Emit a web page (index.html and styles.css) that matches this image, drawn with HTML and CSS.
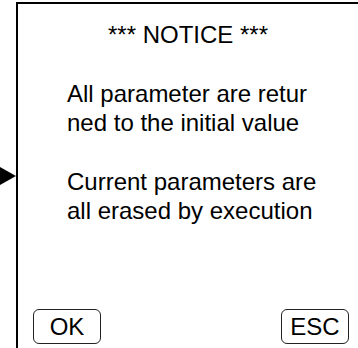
FILE: index.html
```html
<!DOCTYPE html>
<html lang="en">

<head>
    <meta charset="UTF-8">
    <title>Notice</title>
    <link rel="stylesheet" href="styles.css">
</head>

<body>

    <div class="screen">
        <!-- Cursor marker on the left edge -->
        <div class="marker">
            <svg width="16" height="18" viewBox="0 0 16 18">
                <polygon points="0,0 16,9 0,18" fill="#000" />
            </svg>
        </div>

        <div class="panel">
            <div class="title">*** NOTICE ***</div>
            <p class="message">All parameter are retur<br>ned to the initial value</p>
            <p class="message">Current parameters are<br>all erased by execution</p>

            <div class="actions">
                <button class="key">OK</button>
                <button class="key">ESC</button>
            </div>
        </div>
    </div>

</body>

</html>
```

FILE: styles.css
```css
body {
    margin: 0;
    padding: 0;
    background-color: #fff;
    font-family: 'Liberation Sans', Arial, sans-serif;
    color: #000;
}

.screen {
    display: flex;
    width: 358px;
    height: 348px;
    overflow: hidden;
}

.marker {
    width: 16px;
    flex-shrink: 0;
    margin-top: 167px;
}

.marker svg {
    display: block;
}

.panel {
    flex: 1;
    display: flex;
    flex-direction: column;
    margin-top: 2px;
    border-left: 2px solid #000;
    border-top: 2px solid #000;
    padding-top: 16px;
}

.title {
    font-size: 24px;
    line-height: 29px;
    text-align: center;
}

.message {
    margin: 30px 0 0 0;
    padding-left: 49px;
    font-size: 24px;
    line-height: 29px;
}

.actions {
    margin-top: auto;
    display: flex;
    justify-content: space-between;
    padding: 0 9px 4px 15px;
}

.key {
    width: 68px;
    height: 35px;
    padding: 0;
    background-color: #fff;
    border: 1px solid #222;
    border-radius: 6px;
    font-family: 'Liberation Sans', Arial, sans-serif;
    font-size: 24px;
    line-height: 33px;
    color: #000;
    text-align: center;
}
```
